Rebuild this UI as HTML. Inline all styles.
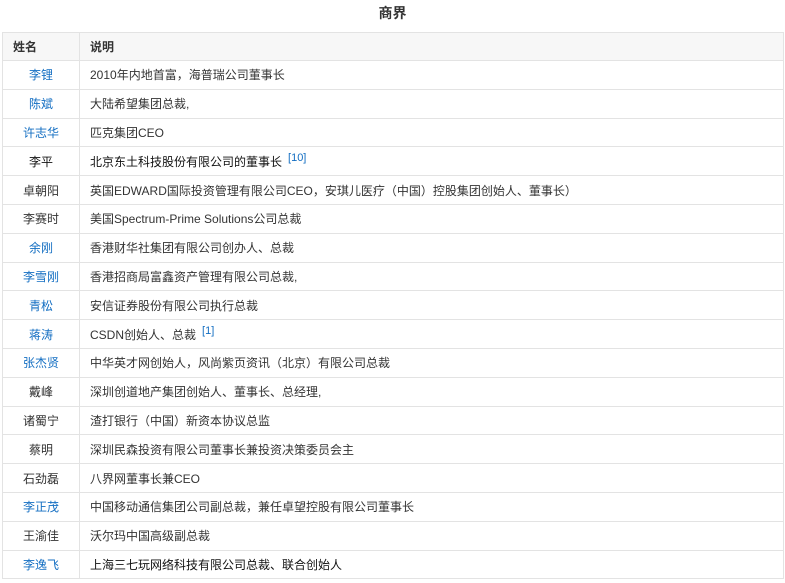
<!DOCTYPE html>
<html><head><meta charset="utf-8"><style>
body{margin:0;background:#fff;font-family:"Liberation Sans","Noto Sans CJK SC",sans-serif;font-size:12px;color:#333}
h3{margin:0;height:32px;line-height:26px;text-align:center;font-size:14px;font-weight:bold;color:#333}
table{position:absolute;left:2px;top:32px;width:782px;border-collapse:collapse}
td,th{border:1px solid #e3e3e3;height:27.8px;padding:0 0 0 10px;text-align:left}
th{background:#f7f7f7;font-weight:bold;height:27px}
td:first-child{width:66px;text-align:center;padding:0}
th:first-child{width:66px;padding-left:10px}
a{color:#136ec2;text-decoration:none}
.k{color:#111}
sup{color:#136ec2;font-size:11px;margin-left:6px}
</style></head><body>
<h3>商界</h3>
<table>
<tr><th>姓名</th><th>说明</th></tr>
<tr><td><a>李锂</a></td><td>2010年内地首富，海普瑞公司董事长</td></tr>
<tr><td><a>陈斌</a></td><td>大陆希望集团总裁,</td></tr>
<tr><td><a>许志华</a></td><td>匹克集团CEO</td></tr>
<tr><td class="k">李平</td><td class="k">北京东土科技股份有限公司的董事长<sup>[10]</sup></td></tr>
<tr><td>卓朝阳</td><td>英国EDWARD国际投资管理有限公司CEO，安琪儿医疗（中国）控股集团创始人、董事长）</td></tr>
<tr><td>李赛时</td><td>美国Spectrum-Prime Solutions公司总裁</td></tr>
<tr><td><a>余刚</a></td><td>香港财华社集团有限公司创办人、总裁</td></tr>
<tr><td><a>李雪刚</a></td><td>香港招商局富鑫资产管理有限公司总裁,</td></tr>
<tr><td><a>青松</a></td><td>安信证券股份有限公司执行总裁</td></tr>
<tr><td><a>蒋涛</a></td><td>CSDN创始人、总裁<sup>[1]</sup></td></tr>
<tr><td><a>张杰贤</a></td><td>中华英才网创始人，风尚紫页资讯（北京）有限公司总裁</td></tr>
<tr><td>戴峰</td><td>深圳创道地产集团创始人、董事长、总经理,</td></tr>
<tr><td>诸蜀宁</td><td>渣打银行（中国）新资本协议总监</td></tr>
<tr><td>蔡明</td><td>深圳民森投资有限公司董事长兼投资决策委员会主</td></tr>
<tr><td>石劲磊</td><td>八界网董事长兼CEO</td></tr>
<tr><td><a>李正茂</a></td><td>中国移动通信集团公司副总裁，兼任卓望控股有限公司董事长</td></tr>
<tr><td>王渝佳</td><td>沃尔玛中国高级副总裁</td></tr>
<tr><td><a>李逸飞</a></td><td class="k">上海三七玩网络科技有限公司总裁、联合创始人</td></tr>
</table>
</body></html>
